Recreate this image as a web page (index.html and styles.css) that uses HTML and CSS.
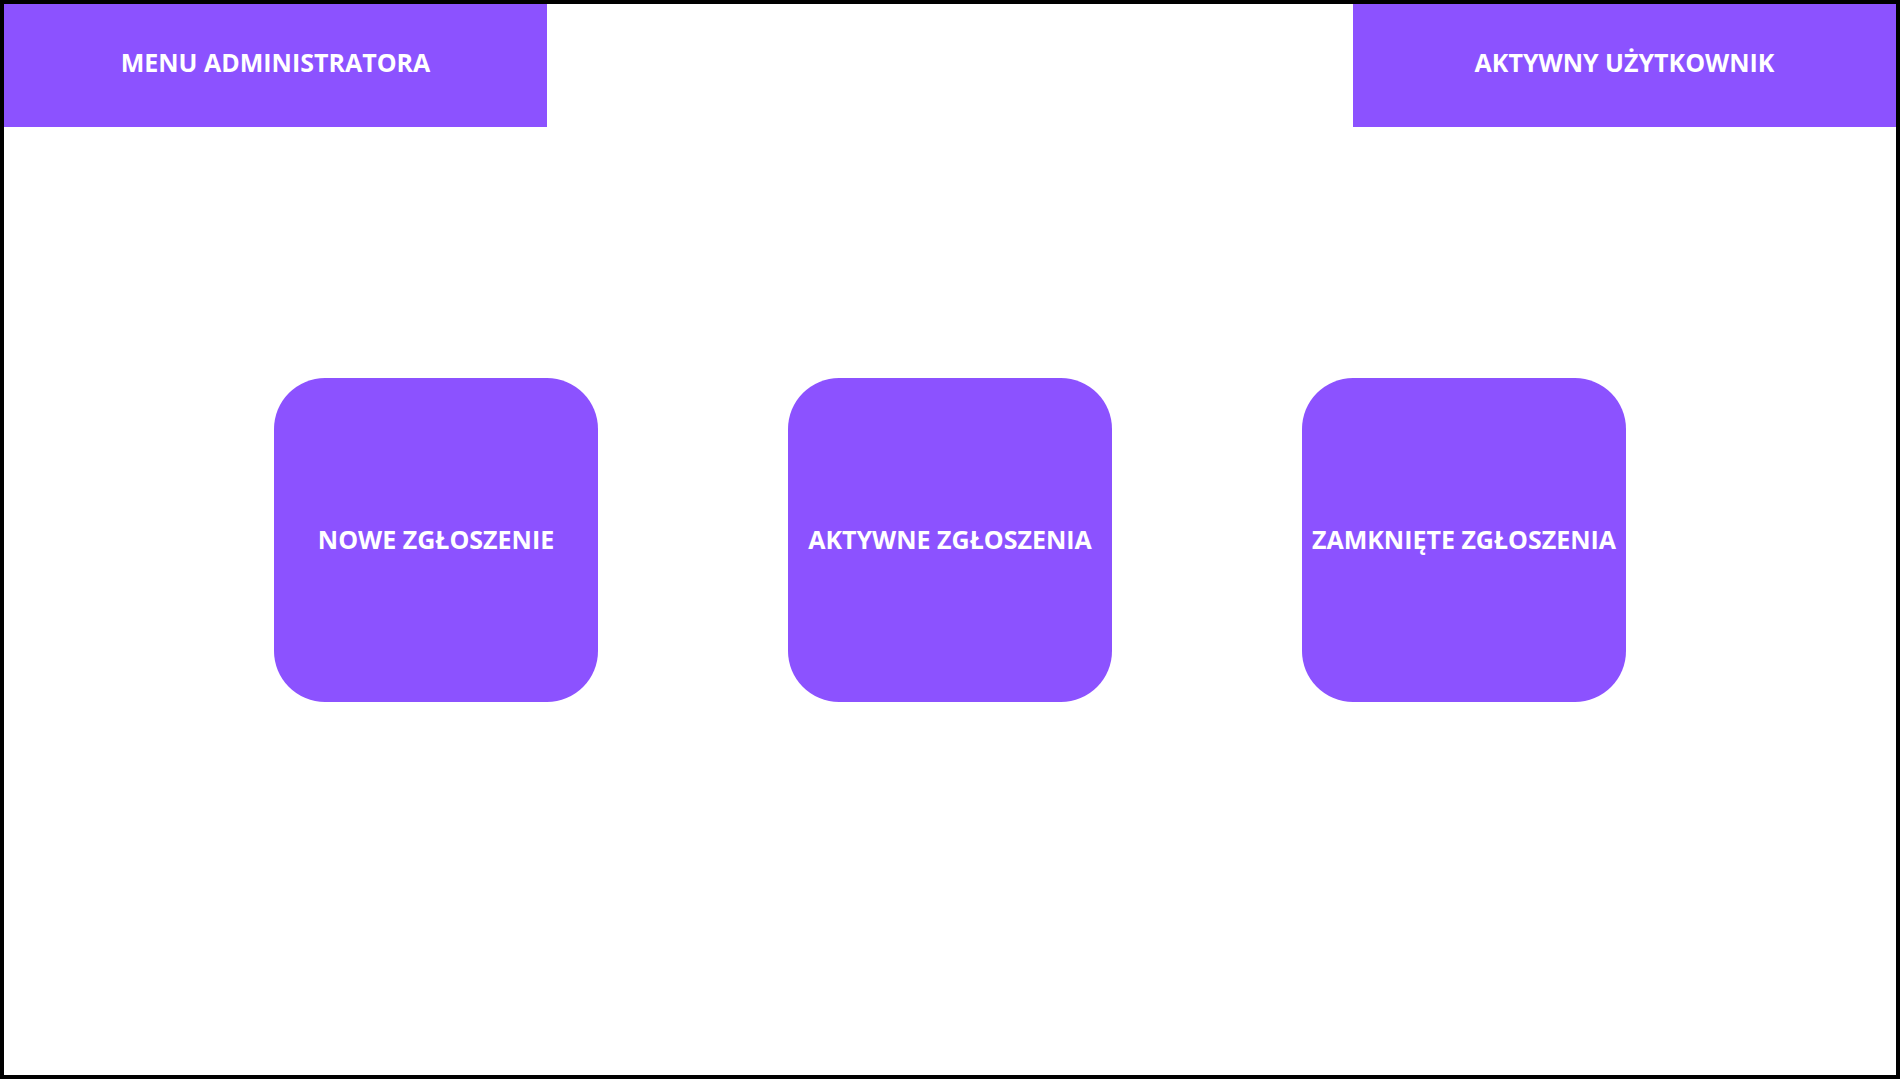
FILE: index.html
```html
<!DOCTYPE html>
<html lang="pl">
<head>
<meta charset="utf-8">
<title>Panel zgłoszeń</title>
<link rel="stylesheet" href="styles.css">
</head>
<body>
<header class="topbar">
<button class="tab" type="button">MENU ADMINISTRATORA</button>
<button class="tab" type="button">AKTYWNY UŻYTKOWNIK</button>
</header>
<main class="tiles">
<button class="tile" type="button">NOWE ZGŁOSZENIE</button>
<button class="tile" type="button">AKTYWNE ZGŁOSZENIA</button>
<button class="tile" type="button">ZAMKNIĘTE ZGŁOSZENIA</button>
</main>
</body>
</html>
```
FILE: styles.css
```css
* {
  box-sizing: border-box;
}

html {
  background: #fff;
}

body {
  display: flex;
  flex-direction: column;
  min-height: calc(100vh - 1px);
  margin: 0;
  border: 4px solid #000;
  font-family: "Open Sans", sans-serif;
}

.topbar {
  display: flex;
  justify-content: space-between;
}

.tab,
.tile {
  padding: 0 0 2px;
  border: 0;
  background: #8c52ff;
  color: #fff;
  font: 700 25px/36px "Open Sans", sans-serif;
  white-space: nowrap;
  cursor: pointer;
}

.tab {
  width: 28.7%;
  min-width: 340px;
  height: 123px;
  padding-bottom: 8px;
}

.tiles {
  display: flex;
  flex-wrap: wrap;
  justify-content: center;
  gap: 48px 10vw;
  padding: 251px 24px 48px;
}

.tile {
  width: 324px;
  height: 324px;
  border-radius: 51px;
}
```
